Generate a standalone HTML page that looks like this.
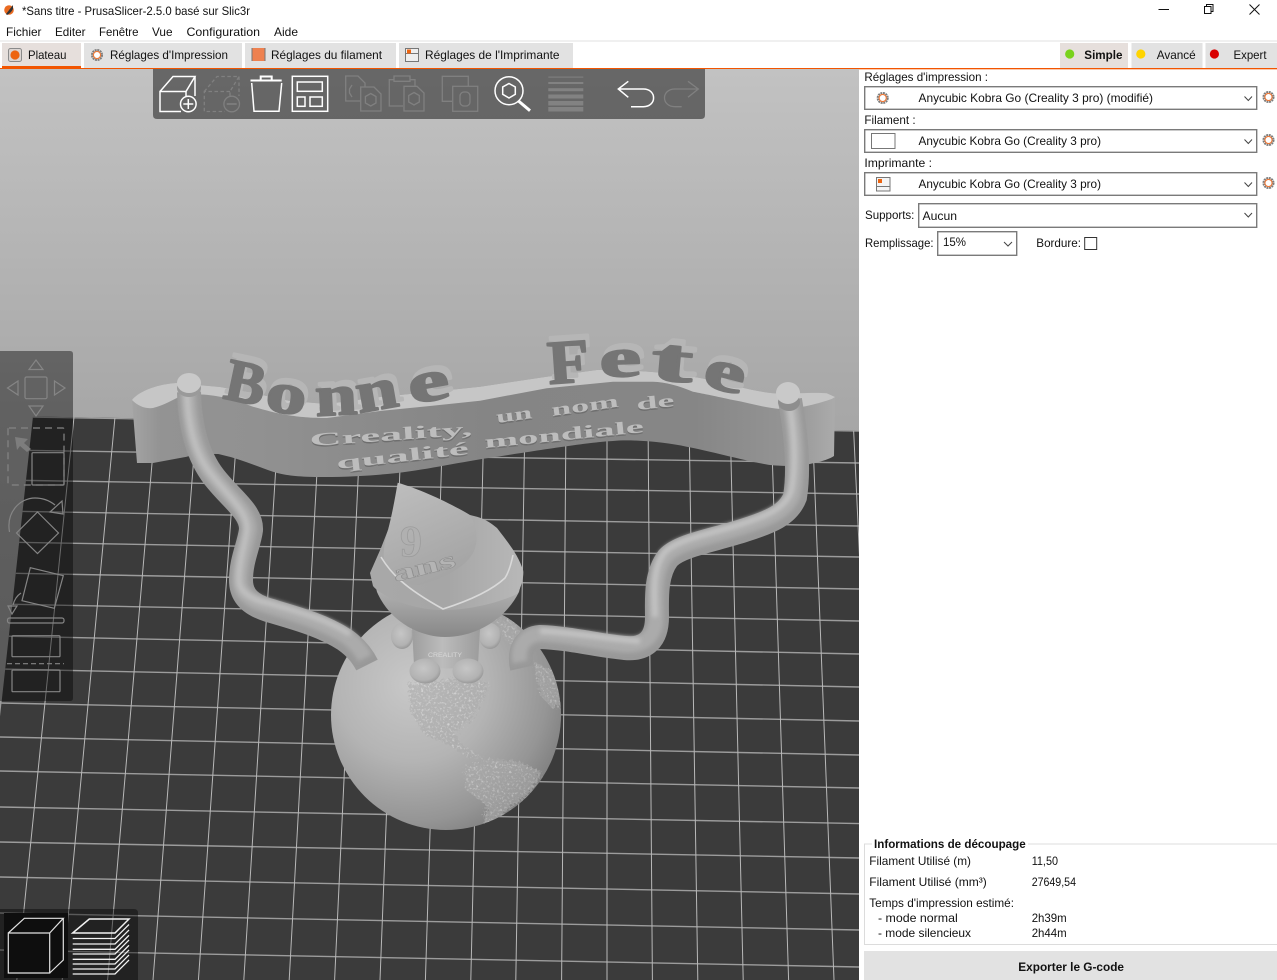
<!DOCTYPE html>
<html lang="fr"><head><meta charset="utf-8"><title>PrusaSlicer</title>
<style>
html,body{margin:0;padding:0;background:#fff;width:1277px;height:980px;overflow:hidden}
svg{display:block;position:absolute;left:0;top:0}
text{font-family:"Liberation Sans",sans-serif;font-size:12px;fill:#111}
.b{font-weight:bold}
.l text{font-family:"Liberation Serif",serif;font-weight:bold}
.l .ex{fill:#b6b6b6;stroke:#b6b6b6;stroke-width:3;stroke-linejoin:round}
.l .fc{fill:#757575;stroke:#757575;stroke-width:1.8;stroke-linejoin:round}
.l .sh{fill:#6e6e6e;font-size:18px}
.l .hi{fill:#bdbdbd;font-size:18px}
.ic{fill:none;stroke:#fff;stroke-width:1.5}
.ig{fill:none;stroke:#808080;stroke-width:1.3}
.pn{fill:none;stroke:#858585;stroke-width:1.2}
.c{fill:#fff;stroke:#7a7a7a;stroke-width:1.4}
.ch{fill:none;stroke:#444;stroke-width:1}
</style></head><body>
<svg width="1277" height="980" viewBox="0 0 1277 980" xmlns="http://www.w3.org/2000/svg">
<defs>
<linearGradient id="bg" x1="0" y1="69" x2="0" y2="980" gradientUnits="userSpaceOnUse"><stop offset="0" stop-color="#c2c2c2"/><stop offset=".385" stop-color="#a7a7a7"/><stop offset="1" stop-color="#909090"/></linearGradient>
<linearGradient id="wall" x1="132" y1="0" x2="835" y2="0" gradientUnits="userSpaceOnUse"><stop offset="0" stop-color="#a4a4a4"/><stop offset=".04" stop-color="#939393"/><stop offset=".18" stop-color="#919191"/><stop offset=".5" stop-color="#858585"/><stop offset=".8" stop-color="#868686"/><stop offset=".93" stop-color="#949494"/><stop offset="1" stop-color="#ababab"/></linearGradient>
<radialGradient id="sph" gradientUnits="userSpaceOnUse" cx="412" cy="685" r="170"><stop offset="0" stop-color="#c8c8c8"/><stop offset=".45" stop-color="#b4b4b4"/><stop offset=".8" stop-color="#959595"/><stop offset="1" stop-color="#7a7a7a"/></radialGradient>
<linearGradient id="bowl" x1="0" y1="590" x2="0" y2="640" gradientUnits="userSpaceOnUse"><stop offset="0" stop-color="#b0b0b0"/><stop offset="1" stop-color="#858585"/></linearGradient>
<linearGradient id="band" x1="372" y1="0" x2="523" y2="0" gradientUnits="userSpaceOnUse"><stop offset="0" stop-color="#a8a8a8"/><stop offset=".5" stop-color="#a6a6a6"/><stop offset="1" stop-color="#b8b8b8"/></linearGradient>
<linearGradient id="cone" x1="395" y1="490" x2="440" y2="590" gradientUnits="userSpaceOnUse"><stop offset="0" stop-color="#bcbcbc"/><stop offset="1" stop-color="#a2a2a2"/></linearGradient>
<linearGradient id="body" x1="412" y1="0" x2="480" y2="0" gradientUnits="userSpaceOnUse"><stop offset="0" stop-color="#9e9e9e"/><stop offset=".45" stop-color="#bcbcbc"/><stop offset="1" stop-color="#9c9c9c"/></linearGradient>
<radialGradient id="ball" cx=".45" cy=".4" r=".62"><stop offset="0" stop-color="#c6c6c6"/><stop offset=".75" stop-color="#b2b2b2"/><stop offset="1" stop-color="#949494"/></radialGradient>
<clipPath id="bed"><polygon points="33,416.5 859,431 859,980 -29,980"/></clipPath>
<clipPath id="sc"><circle cx="446" cy="715" r="115"/></clipPath>
<clipPath id="scene"><rect x="0" y="69" width="859" height="911"/></clipPath>
<filter id="bl" x="-20%" y="-20%" width="140%" height="140%"><feGaussianBlur stdDeviation="2"/></filter>
<filter id="noise" x="-5%" y="-5%" width="110%" height="110%">
<feTurbulence type="fractalNoise" baseFrequency=".42" numOctaves="3" seed="7" result="n"/>
<feDisplacementMap in="SourceGraphic" in2="n" scale="12" result="d"/>
<feColorMatrix in="n" type="matrix" values="0 0 0 0 .86  0 0 0 0 .86  0 0 0 0 .86  3 0 0 0 -1.6" result="spk"/>
<feComposite in="spk" in2="d" operator="in" result="s2"/>
<feColorMatrix in="n" type="matrix" values="0 0 0 0 .45  0 0 0 0 .45  0 0 0 0 .45  0 3 0 0 -1.7" result="dk"/>
<feComposite in="dk" in2="d" operator="in" result="s3"/>
<feMerge><feMergeNode in="d"/><feMergeNode in="s2"/><feMergeNode in="s3"/></feMerge>
</filter>
<symbol id="gear" viewBox="-8 -8 16 16" overflow="visible">
<circle r="5.7" fill="none" stroke="#7d7d7d" stroke-width="2.4" stroke-dasharray="2.2 .8"/>
<circle r="4.1" fill="#fff" stroke="#ed7a3a" stroke-width="1.3"/>
</symbol>
</defs>

<!-- window chrome -->
<rect width="1277" height="980" fill="#fff"/>
<circle cx="9" cy="10" r="4.8" fill="#ea6a20"/><path d="M6 14 L13 5 L13 9 Q11 13 7 15Z" fill="#333"/>
<text x="22" y="15" textLength="228" lengthAdjust="spacingAndGlyphs">*Sans titre - PrusaSlicer-2.5.0 basé sur Slic3r</text>
<path d="M1158.5 9.5H1169" stroke="#111" fill="none"/>
<path d="M1204.5 6.5h6.5v7h-6.5zM1206.5 6.5v-2h6.5v7h-2" stroke="#111" fill="none"/>
<path d="M1249.5 4.5l10 10M1259.5 4.5l-10 10" stroke="#111" fill="none"/>
<text x="6" y="36" textLength="35.5" lengthAdjust="spacingAndGlyphs">Fichier</text>
<text x="55" y="36" textLength="30.5" lengthAdjust="spacingAndGlyphs">Editer</text>
<text x="99" y="36" textLength="39.5" lengthAdjust="spacingAndGlyphs">Fenêtre</text>
<text x="152" y="36" textLength="20.5" lengthAdjust="spacingAndGlyphs">Vue</text>
<text x="186.5" y="36" textLength="73.5" lengthAdjust="spacingAndGlyphs">Configuration</text>
<text x="274" y="36" textLength="24" lengthAdjust="spacingAndGlyphs">Aide</text>
<rect x="0" y="40" width="1277" height="2" fill="#f0f0f0"/>

<!-- tabs -->
<rect x="2" y="43" width="79" height="25" fill="#e6dfdc"/>
<rect x="84" y="43" width="158" height="25" fill="#e2e2e2"/>
<rect x="245" y="43" width="151" height="25" fill="#e2e2e2"/>
<rect x="399" y="43" width="174" height="25" fill="#e2e2e2"/>
<rect x="1060" y="43" width="68" height="25" fill="#e6dfdc"/>
<rect x="1131.5" y="43" width="71" height="25" fill="#e2e2e2"/>
<rect x="1205.5" y="43" width="71.5" height="25" fill="#e2e2e2"/>
<rect x="2" y="66" width="79" height="2" fill="#f25500"/>
<rect x="0" y="68" width="1277" height="1.4" fill="#f25500"/>
<rect x="8.5" y="48.5" width="13" height="13" rx="2" fill="#dcd6d3" stroke="#8a8a8a"/>
<circle cx="15" cy="55" r="4.6" fill="#ed6410"/>
<use href="#gear" x="90" y="48" width="14" height="14"/>
<rect x="252" y="48" width="13" height="13" fill="#ee8150"/><path d="M252 48v13M265 48v13" stroke="#777"/>
<rect x="405.5" y="48.5" width="13" height="13" fill="#eee" stroke="#777"/><path d="M406 53.5h12" stroke="#777"/><rect x="407" y="49.5" width="4" height="4" fill="#ed6410"/>
<text x="28" y="59" textLength="38.5" lengthAdjust="spacingAndGlyphs">Plateau</text>
<text x="110" y="59" textLength="118" lengthAdjust="spacingAndGlyphs">Réglages d'Impression</text>
<text x="271" y="59" textLength="111" lengthAdjust="spacingAndGlyphs">Réglages du filament</text>
<text x="425" y="59" textLength="134.5" lengthAdjust="spacingAndGlyphs">Réglages de l'Imprimante</text>
<circle cx="1069.7" cy="54" r="4.6" fill="#79d21c"/>
<circle cx="1140.8" cy="54" r="4.6" fill="#ffd400"/>
<circle cx="1214.4" cy="54" r="4.6" fill="#d90000"/>
<text class="b" x="1084.3" y="59" textLength="38.2" lengthAdjust="spacingAndGlyphs">Simple</text>
<text x="1156.7" y="59" textLength="39" lengthAdjust="spacingAndGlyphs">Avancé</text>
<text x="1233.5" y="59" textLength="33" lengthAdjust="spacingAndGlyphs">Expert</text>

<!-- 3D scene -->
<g clip-path="url(#scene)">
<rect x="0" y="69" width="859" height="911" fill="url(#bg)"/>
<polygon points="33,416.5 859,431 859,980 -29,980" fill="#3b3b3b"/>
<g clip-path="url(#bed)">
<g stroke="#9c9c9c" stroke-width="1.4" fill="none">
<path d="M0 416.5L859 431M0 450L859 463M0 480L859 494M0 511L859 526M0 542L859 557M0 573L859 589M0 604L859 621M0 636L859 654M0 669L859 687M0 703L859 721M0 737L859 755M0 771L859 788M0 807L859 823.6M0 842L859 858M0 877L859 894M0 913L859 930M0 950L859 967"/>
</g>
<g stroke="#b8b8b8" stroke-width="1" fill="none">
<path d="M74 417L16.8 980M115 417L62.2 980M156 417L107.6 980M197 417L153 980M238 417L198.4 980M279 417L243.8 980M320 417L289.2 980M361 417L334.6 980M402 417L380 980M443 417L425.4 980M484 417L470.8 980M525 417L515.8 980M566 417L561.6 980M607 417L607 980M648 417L652.4 980M689 417L697.8 980M730 417L743.2 980M771 417L788.6 980M812 417L834 980M853 417L879.4 980"/>
</g>
</g>

<!-- globe -->
<circle cx="446" cy="715" r="115" fill="url(#sph)"/>
<g clip-path="url(#sc)">
<g fill="#aaaaaa" filter="url(#noise)" opacity=".55">
<path d="M408 684L470 678L489 682L482 700L470 720L455 733L462 745L484 757L470 760L449 745L425 735L412 715Z"/>
<path d="M464 768L490 758L520 762L542 772L530 795L510 808L494 828L484 826L486 805L466 790Z"/>
<path d="M496 620L512 618L528 645L517 650L505 640Z"/>
<path d="M534 662L555 672L562 705L552 708L540 695Z"/>
</g>
</g>

<!-- banner -->
<path d="M132 400C140 390 160 384 176 383L220 387L253 393L290 401L327 404L380 397L430 392L480 386.7L546.7 376.7L596.7 370C620 369 660 372 693 376.7C720 381 750 391 773 393.3C790 394 815 392 826.7 393.3L835 397L834 456Q828 460 813 463.3C800 467 780 466 770 465C750 462 710 451 686.7 446.7C665 442 630 439 613 441C590 442 535 451 496.7 456.7C460 462 430 469 397 473C380 475 340 478 306.7 476.7C290 476 280 474 273 471.7C255 466 240 458 213 453C200 453 190 456 186.7 456.7L153 463L137 463Z" fill="url(#wall)"/>
<path d="M132 400C140 390 160 384 176 383L220 387L253 393L290 401L327 404L380 397L430 392L480 386.7L546.7 376.7L596.7 370C620 369 660 372 693 376.7C720 381 750 391 773 393.3C790 394 815 392 826.7 393.3L835 397L831.7 399C820 403 800 409 780 409C765 408 750 403 733 400C715 396 705 394 693 391.7C680 386 665 382 653 381.7L613 381.7L546.7 388.3L480 400.7L430 406L380 411L327 418C310 418 300 417 287 415C275 413 265 410 253 406.7C240 402 230 398 220 396.7C205 394 195 394 183 395C172 400 165 405 153 408C145 409 138 406 132 400Z" fill="#c6c6c6"/>

<!-- raised title letters -->
<g class="l">
<g transform="translate(225 392) rotate(12)"><text class="ex" style="font-size:60px">B</text></g>
<g transform="translate(267 404) rotate(8) scale(1.4 1)"><text class="ex" style="font-size:58px">o</text></g>
<g transform="translate(319 410) rotate(-3) scale(1.3 1)"><text class="ex" style="font-size:58px">n</text></g>
<g transform="translate(362 407) rotate(-10) scale(1.3 1)"><text class="ex" style="font-size:58px">n</text></g>
<g transform="translate(414 398) rotate(-10) scale(1.6 1)"><text class="ex" style="font-size:58px">e</text></g>
<g transform="translate(552 378) rotate(-4) scale(1.1 1)"><text class="ex" style="font-size:62px">F</text></g>
<g transform="translate(603 371) rotate(-2) scale(1.7 1)"><text class="ex" style="font-size:55px">e</text></g>
<g transform="translate(653 373) rotate(5) scale(2 1)"><text class="ex" style="font-size:62px">t</text></g>
<g transform="translate(704 379) rotate(14) scale(1.6 1)"><text class="ex" style="font-size:58px">e</text></g>
<g transform="translate(222 398) rotate(12)"><text class="fc" style="font-size:60px">B</text></g>
<g transform="translate(264 410) rotate(8) scale(1.4 1)"><text class="fc" style="font-size:58px">o</text></g>
<g transform="translate(316 416) rotate(-3) scale(1.3 1)"><text class="fc" style="font-size:58px">n</text></g>
<g transform="translate(359 413) rotate(-10) scale(1.3 1)"><text class="fc" style="font-size:58px">n</text></g>
<g transform="translate(411 404) rotate(-10) scale(1.6 1)"><text class="fc" style="font-size:58px">e</text></g>
<g transform="translate(549 384) rotate(-4) scale(1.1 1)"><text class="fc" style="font-size:62px">F</text></g>
<g transform="translate(600 377) rotate(-2) scale(1.7 1)"><text class="fc" style="font-size:55px">e</text></g>
<g transform="translate(650 379) rotate(5) scale(2 1)"><text class="fc" style="font-size:62px">t</text></g>
<g transform="translate(701 385) rotate(14) scale(1.6 1)"><text class="fc" style="font-size:58px">e</text></g>
<!-- engraved lines -->
<g transform="translate(310 446) rotate(-4)"><text class="sh" y="1.5" textLength="163" lengthAdjust="spacingAndGlyphs">Creality,</text><text class="hi" textLength="163" lengthAdjust="spacingAndGlyphs">Creality,</text></g>
<g transform="translate(497 423) rotate(-8)"><text class="sh" y="1.5" textLength="36" lengthAdjust="spacingAndGlyphs">un</text><text class="hi" textLength="36" lengthAdjust="spacingAndGlyphs">un</text></g>
<g transform="translate(552 416) rotate(-8)"><text class="sh" y="1.5" textLength="68" lengthAdjust="spacingAndGlyphs">nom</text><text class="hi" textLength="68" lengthAdjust="spacingAndGlyphs">nom</text></g>
<g transform="translate(637 410) rotate(-6)"><text class="sh" y="1.5" textLength="38" lengthAdjust="spacingAndGlyphs">de</text><text class="hi" textLength="38" lengthAdjust="spacingAndGlyphs">de</text></g>
<g transform="translate(337 469) rotate(-6.5)"><text class="sh" y="1.5" textLength="133" lengthAdjust="spacingAndGlyphs">qualité</text><text class="hi" textLength="133" lengthAdjust="spacingAndGlyphs">qualité</text></g>
<g transform="translate(485 448) rotate(-5.7)"><text class="sh" y="1.5" textLength="160" lengthAdjust="spacingAndGlyphs">mondiale</text><text class="hi" textLength="160" lengthAdjust="spacingAndGlyphs">mondiale</text></g>
</g>

<!-- arms -->
<g fill="none" stroke-linecap="butt">
<path d="M189 392C190 425 197 455 214 477C232 500 252 512 251 530C249 545 241 560 241 580C241 597 252 605 268 610C295 618 322 625 345 640C355 647 362 655 367 665" stroke="#999999" stroke-width="24"/>
<path filter="url(#bl)" d="M188 392C189 425 196 455 213 476C231 499 250 512 249 530C247 545 240 560 240 580C240 595 252 602 268 606C295 614 322 622 347 637C357 645 362 652 365 658" stroke="#ababab" stroke-width="15"/>
<path filter="url(#bl)" d="M187 392C188 425 195 455 212 475C230 498 248 512 247 530C245 545 239 560 239 580C239 592 252 600 268 603C295 611 325 618 350 634" stroke="#c0c0c0" stroke-width="6"/>
<path d="M790 400C795 430 800 465 795 497C788 515 770 522 745 530C715 540 680 545 668 558C655 575 657 600 657 617C657 640 645 650 625 648C600 646 570 638 540 637C525 638 518 650 522 668" stroke="#999999" stroke-width="24"/>
<path filter="url(#bl)" d="M790 400C795 430 799 465 793 495C786 512 768 519 743 527C713 537 678 542 666 556C653 573 656 600 656 617C656 637 643 646 625 645C600 643 570 635 540 634C524 635 517 648 520 662" stroke="#ababab" stroke-width="15"/>
<path filter="url(#bl)" d="M789 400C794 430 797 465 791 492C784 509 766 516 741 524C711 534 676 539 664 553C651 571 655 600 655 617M640 641C610 639 570 632 540 631" stroke="#c2c2c2" stroke-width="6"/>
</g>
<ellipse cx="189" cy="388" rx="12" ry="9" fill="#9a9a9a"/><ellipse cx="189" cy="383" rx="12" ry="10" fill="#c9c9c9"/>
<ellipse cx="789" cy="402" rx="11" ry="9" fill="#8e8e8e"/><ellipse cx="788" cy="393" rx="12" ry="11" fill="#c9c9c9"/>

<!-- character -->
<ellipse cx="402" cy="636" rx="11" ry="13" fill="url(#ball)"/><ellipse cx="490" cy="636" rx="11" ry="13" fill="url(#ball)"/>
<path d="M412 628H480L478 665Q446 672 414 665Z" fill="url(#body)"/>
<ellipse cx="425" cy="671" rx="15.5" ry="12.5" fill="url(#ball)"/><ellipse cx="468" cy="671" rx="15.5" ry="12.5" fill="url(#ball)"/>
<text x="428" y="657" textLength="34" lengthAdjust="spacingAndGlyphs" style="font-size:6px;fill:#d8d8d8">CREALITY</text>
<path d="M377 592C390 622 420 637 445 637C475 637 505 620 519 592L520 588H376Z" fill="url(#bowl)"/>
<path d="M381 548L370 573L373 586C380 595 410 610 443 610C475 610 505 600 517 594C523 585 524 572 523 570C518 555 510 545 497 528C485 518 478 517 470 515L388 530Z" fill="url(#band)"/>
<path d="M397.7 482.7C420 489 450 503 470 515C477 526 479 542 473 553C465 568 440 580 420 585C405 586 392 575 384 560C383 550 385 540 388 530C392 515 395 498 397.7 482.7Z" fill="url(#cone)"/>
<path d="M381 557C390 572 403 587 443 609C465 602 490 592 505 578C510 570 512 560 513 555" fill="none" stroke="#d9d9d9" stroke-width="1.6"/>
<text x="400" y="556" style="font-family:'Liberation Serif',serif;font-size:44px;font-weight:bold;fill:#b0b0b0;stroke:#9c9c9c;stroke-width:.8">9</text>
<g transform="translate(395 582) rotate(-14)"><text textLength="64" lengthAdjust="spacingAndGlyphs" style="font-family:'Liberation Serif',serif;font-size:24px;font-weight:bold;fill:#b4b4b4;stroke:#8e8e8e;stroke-width:.5">ans</text></g>

<!-- top toolbar -->
<path d="M153 69H705V115Q705 119 701 119H157Q153 119 153 115Z" fill="#000" fill-opacity=".465"/>
<g class="ic">
<path d="M186 91.5H160V111.5H181M160 91.5L173 76.5H195L186 91.5V96M195 76.5V96"/>
<circle cx="188.3" cy="104" r="7.8"/><path d="M188.3 99V109M183.3 104H193.3"/>
<path d="M251.7 83L254 111.3H279L281.7 83"/><path d="M250.5 80.5H281.7M260.7 79.5V76.5H271.7V79.5" stroke-width="2"/>
<rect x="292.3" y="76.3" width="35.4" height="35"/><rect x="297.3" y="82" width="25" height="9.3"/><rect x="297.3" y="97" width="7.7" height="9.3"/><rect x="310" y="97" width="12.3" height="9.3"/>
<circle cx="509" cy="90.7" r="14"/><path d="M509 83.5L515.3 87V94.3L509 98L502.7 94.3V87Z"/><path d="M518.5 101L530 110.7" stroke-width="3"/>
<path d="M628.3 81.3L618.3 89L628.3 97.3M618.3 89H643.3C657 89 657 106.7 643.3 106.7H631"/>
</g>
<g class="ig" stroke-dasharray="3.5 2.5">
<path d="M230 91.5H204.3V111.5H225M204.3 91.5L217 76.5H239L230 91.5V96M239 76.5V96"/>
</g>
<g class="ig">
<circle cx="231.7" cy="104" r="7.8"/><path d="M226.7 104H236.7" stroke-width="1.6"/>
<path d="M360 101H345.7V76H358L365 83V87M352 85L349.5 89V93L352 97"/>
<path d="M360.7 87H374L381 94V111H360.7Z"/><path d="M370.7 93.5L376 96.5V103L370.7 106L365.4 103V96.5Z"/>
<path d="M403 106H389.3V79.7H394M410 79.7H415V86M394 76H410V81.3H394Z"/>
<path d="M404 86.3H417L424 93V111H404Z"/><path d="M414 92.5L419.3 95.5V102L414 105L408.7 102V95.5Z"/>
<path d="M452 101.3H442.3V76.3H468.3V86"/><rect x="452.7" y="86.3" width="25" height="25"/><rect x="460" y="92" width="10" height="14" rx="4"/>
<path d="M688 81.3L698.3 89L688 97.3M698.3 89H675C661 89 661 106.7 675 106.7H681.7"/>
</g>
<g fill="#828282"><rect x="548.3" y="76.6" width="35" height="1"/><rect x="548.3" y="82" width="35" height="2"/><rect x="548.3" y="88.2" width="35" height="3"/><rect x="548.3" y="94.5" width="35" height="4"/><rect x="548.3" y="101" width="35" height="4.5"/><rect x="548.3" y="107" width="35" height="4.5"/></g>

<!-- left toolbar -->
<path d="M0 351H70Q73 351 73 354V698Q73 701 70 701H0Z" fill="#000" fill-opacity=".42"/>
<g class="pn">
<path d="M36 360L29 369.5H43Z"/><rect x="25" y="377" width="22" height="21.7" rx="1.5"/><path d="M7.5 388L18 381V395Z"/><path d="M54.5 381L65 388L54.5 395Z"/><path d="M29 406H43L36 416Z"/>
<rect x="8" y="428" width="56" height="57" rx="1" stroke-dasharray="7 5"/><rect x="32" y="452.7" width="32" height="32.3" rx="1"/>
<path d="M9.5 532C6 512 20 498 35 498C44 498 50 501 55 505"/><path d="M50 512L62 501L63 514Z"/><path d="M37.5 512L58.5 533L37.5 553.5L16.5 533Z"/>
<path d="M30.3 567.7L63.3 575.7L54.3 608.3L22 600.7Z"/><path d="M21 593Q15 597 13 605"/><path d="M8 606H17L12 614Z"/>
<rect x="7.5" y="618" width="56.5" height="5" rx="2"/><rect x="12" y="635.7" width="48" height="21" rx="1"/><path d="M7 663.7H64" stroke-dasharray="5 3"/><rect x="12" y="670" width="48" height="21.7" rx="1"/>
</g>
<path d="M15 437L28 439L24 443L31 449L27 452L20 446L17 450Z" fill="#7d7d7d"/>

<!-- bottom-left toolbar -->
<path d="M0 909H134Q138 909 138 913V980H0Z" fill="#000" fill-opacity=".42"/>
<rect x="4" y="913" width="64" height="65" fill="#0e0e0e"/>
<g fill="none" stroke="#e2e2e2" stroke-width="1.2">
<path d="M8.3 933H49.7V973H8.3ZM8.3 933L24.3 918.3H63.3L49.7 933M63.3 918.3V960L49.7 973"/>
</g>
<g fill="none" stroke="#f2f2f2" stroke-width="1.5">
<path d="M72.7 933L89.3 919H129L115 933Z"/>
<path d="M72.7 938.5H115L129 924.5M72.7 944H115L129 930M72.7 949.3H115L129 935.3M72.7 954H115L129 940M72.7 959.3H115L129 945.3M72.7 964H115L129 950M72.7 969H115L129 955M72.7 974H115L129 960" stroke-width="1.3"/>
</g>
</g>

<!-- sidebar -->
<rect x="859" y="69.4" width="418" height="911" fill="#fff"/>
<text x="864.4" y="81" textLength="123.6" lengthAdjust="spacingAndGlyphs">Réglages d'impression :</text>
<rect class="c" x="864.7" y="86.7" width="392" height="22.6"/>
<use href="#gear" x="875.7" y="91" width="14" height="14"/>
<text x="918.5" y="102" textLength="234.5" lengthAdjust="spacingAndGlyphs">Anycubic Kobra Go (Creality 3 pro) (modifié)</text>
<path class="ch" d="M1244.5 96.5L1248.3 100.5L1252 96.5"/>
<use href="#gear" x="1261.5" y="90" width="14" height="14"/>
<text x="864.4" y="124" textLength="51.2" lengthAdjust="spacingAndGlyphs">Filament :</text>
<rect class="c" x="864.7" y="129.7" width="392" height="22.6"/>
<rect x="871.5" y="133.5" width="23.5" height="15" fill="#fff" stroke="#777"/>
<text x="918.5" y="145" textLength="182.5" lengthAdjust="spacingAndGlyphs">Anycubic Kobra Go (Creality 3 pro)</text>
<path class="ch" d="M1244.5 139.5L1248.3 143.5L1252 139.5"/>
<use href="#gear" x="1261.5" y="133" width="14" height="14"/>
<text x="864.4" y="167" textLength="67.6" lengthAdjust="spacingAndGlyphs">Imprimante :</text>
<rect class="c" x="864.7" y="172.7" width="392" height="22.6"/>
<rect x="876.5" y="177.5" width="13.5" height="13.5" fill="#f4f4f4" stroke="#777"/><path d="M877 186.5H890" stroke="#777"/><rect x="878" y="179" width="4" height="4" fill="#ed6410"/>
<text x="918.5" y="188" textLength="182.5" lengthAdjust="spacingAndGlyphs">Anycubic Kobra Go (Creality 3 pro)</text>
<path class="ch" d="M1244.5 182.5L1248.3 186.5L1252 182.5"/>
<use href="#gear" x="1261.5" y="176" width="14" height="14"/>
<text x="865" y="219" textLength="49.4" lengthAdjust="spacingAndGlyphs">Supports:</text>
<rect class="c" x="918.7" y="203.7" width="338" height="23.6"/>
<text x="922.5" y="220" textLength="34.5" lengthAdjust="spacingAndGlyphs">Aucun</text>
<path class="ch" d="M1244.5 213L1248.3 217L1252 213"/>
<text x="865" y="247" textLength="68.5" lengthAdjust="spacingAndGlyphs">Remplissage:</text>
<rect class="c" x="937.7" y="231.7" width="79" height="23.6"/>
<text x="943" y="246" textLength="23" lengthAdjust="spacingAndGlyphs">15%</text>
<path class="ch" d="M1004 242L1008 246L1012 242"/>
<text x="1036.3" y="247" textLength="44.7" lengthAdjust="spacingAndGlyphs">Bordure:</text>
<rect x="1084.7" y="237.5" width="12" height="12" fill="#fff" stroke="#333"/>

<!-- slice info -->
<path d="M1277 844H864.5V944.5H1277" fill="none" stroke="#dcdcdc" stroke-width="1"/>
<rect x="872" y="838" width="156" height="12" fill="#fff"/>
<text class="b" x="874" y="848" textLength="151.7" lengthAdjust="spacingAndGlyphs">Informations de découpage</text>
<text x="869.3" y="865" textLength="101.7" lengthAdjust="spacingAndGlyphs">Filament Utilisé (m)</text>
<text x="1031.7" y="865" textLength="26.3" lengthAdjust="spacingAndGlyphs">11,50</text>
<text x="869.3" y="886" textLength="117.4" lengthAdjust="spacingAndGlyphs">Filament Utilisé (mm³)</text>
<text x="1031.7" y="886" textLength="44.3" lengthAdjust="spacingAndGlyphs">27649,54</text>
<text x="869.3" y="907" textLength="144.7" lengthAdjust="spacingAndGlyphs">Temps d'impression estimé:</text>
<text x="878" y="922" textLength="79.7" lengthAdjust="spacingAndGlyphs">- mode normal</text>
<text x="1031.7" y="922" textLength="35" lengthAdjust="spacingAndGlyphs">2h39m</text>
<text x="878" y="937" textLength="93" lengthAdjust="spacingAndGlyphs">- mode silencieux</text>
<text x="1031.7" y="937" textLength="35" lengthAdjust="spacingAndGlyphs">2h44m</text>
<rect x="864" y="951" width="413" height="29" fill="#e2e2e2"/>
<text class="b" x="1018.3" y="971" textLength="105.7" lengthAdjust="spacingAndGlyphs">Exporter le G-code</text>
</svg>
</body></html>
